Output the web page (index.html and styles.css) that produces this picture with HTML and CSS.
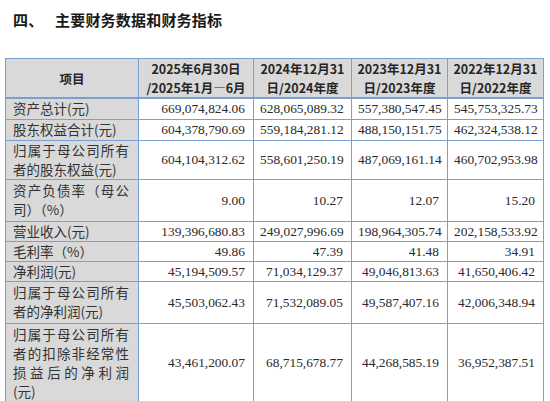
FILE: index.html
```html
<!DOCTYPE html>
<html lang="zh-CN">
<head>
<meta charset="utf-8">
<link rel="stylesheet" href="styles.css">
</head>
<body>
<h1 class="title"><span class="num">四、</span><span>主要财务数据和财务指标</span></h1>
<table class="fin">
  <colgroup>
    <col class="c1"><col class="c2"><col class="c3"><col class="c4"><col class="c5">
  </colgroup>
  <thead>
    <tr class="hrow">
      <th>项目</th>
      <th>2025年6月30日<br>/2025年1月—6月</th>
      <th>2024年12月31<br>日/2024年度</th>
      <th>2023年12月31<br>日/2023年度</th>
      <th>2022年12月31<br>日/2022年度</th>
    </tr>
  </thead>
  <tbody>
    <tr class="r21"><td class="lab">资产总计(元)</td><td>669,074,824.06</td><td>628,065,089.32</td><td>557,380,547.45</td><td>545,753,325.73</td></tr>
    <tr class="r21"><td class="lab">股东权益合计(元)</td><td>604,378,790.69</td><td>559,184,281.12</td><td>488,150,151.75</td><td>462,324,538.12</td></tr>
    <tr class="r38"><td class="lab">归属于母公司所有者的股东权益(元)</td><td>604,104,312.62</td><td>558,601,250.19</td><td>487,069,161.14</td><td>460,702,953.98</td></tr>
    <tr class="r42"><td class="lab">资产负债率（母公司）（%）</td><td>9.00</td><td>10.27</td><td>12.07</td><td>15.20</td></tr>
    <tr class="r20"><td class="lab">营业收入(元)</td><td>139,396,680.83</td><td>249,027,996.69</td><td>198,964,305.74</td><td>202,158,533.92</td></tr>
    <tr class="r19"><td class="lab">毛利率（%）</td><td>49.86</td><td>47.39</td><td>41.48</td><td>34.91</td></tr>
    <tr class="r19"><td class="lab">净利润(元)</td><td>45,194,509.57</td><td>71,034,129.37</td><td>49,046,813.63</td><td>41,650,406.42</td></tr>
    <tr class="r42"><td class="lab">归属于母公司所有者的净利润(元)</td><td>45,503,062.43</td><td>71,532,089.05</td><td>49,587,407.16</td><td>42,006,348.94</td></tr>
    <tr class="r79"><td class="lab">归属于母公司所有者的扣除非经常性损益后的净利润(元)</td><td>43,461,200.07</td><td>68,715,678.77</td><td>44,268,585.19</td><td>36,952,387.51</td></tr>
    <tr class="r20"><td class="lab"></td><td></td><td></td><td></td><td></td></tr>
  </tbody>
</table>
</body>
</html>
```
FILE: styles.css
```css
html, body {
  margin: 0;
  padding: 0;
  background: #ffffff;
}
body {
  width: 550px;
  height: 401px;
  overflow: hidden;
  color: #222;
}
.title {
  margin: 0;
  padding: 11px 0 0 13px;
  height: 47px;
  box-sizing: border-box;
  font-family: "Noto Sans CJK SC", sans-serif;
  font-size: 15px;
  line-height: 17px;
  font-weight: 700;
  letter-spacing: 0.2px;
  color: #1a1a1a;
  display: flex;
}
.title .num {
  width: 42px;
}
.fin {
  margin-left: 5px;
  margin-top: 11px;
  border-collapse: collapse;
  table-layout: fixed;
  width: 538px;
}
.c1 { width: 133px; }
.c2 { width: 115px; }
.c3 { width: 98px; }
.c4 { width: 96px; }
.c5 { width: 96px; }
.fin th, .fin td {
  border: 1px solid #7a9fd3;
  padding: 0 8px 0 6px;
  vertical-align: middle;
}
.fin th {
  background: #d9d9d9;
  font-family: "Noto Sans CJK SC", sans-serif;
  font-weight: 700;
  font-size: 12.5px;
  line-height: 19px;
  color: #262626;
  text-align: center;
  padding: 0 2px;
}
.hrow {
  height: 39px;
}
.fin thead th {
  border-bottom: 2px solid #7a9fd3;
}
.fin td {
  font-family: "Liberation Serif", "Times New Roman", serif;
  font-size: 13.4px;
  line-height: 19px;
  text-align: right;
  color: #2a2a2a;
}
.fin td.lab {
  background: #d9d9d9;
  font-family: "Noto Sans CJK SC", sans-serif;
  font-size: 13.5px;
  line-height: 19px;
  text-align: justify;
  color: #333;
  padding: 0 9px 0 7px;
}
.r19 { height: 19px; }
.r20 { height: 20px; }
.r21 { height: 21px; }
.r38 { height: 38px; }
.r42 { height: 42px; }
.r79 { height: 79px; }
```
